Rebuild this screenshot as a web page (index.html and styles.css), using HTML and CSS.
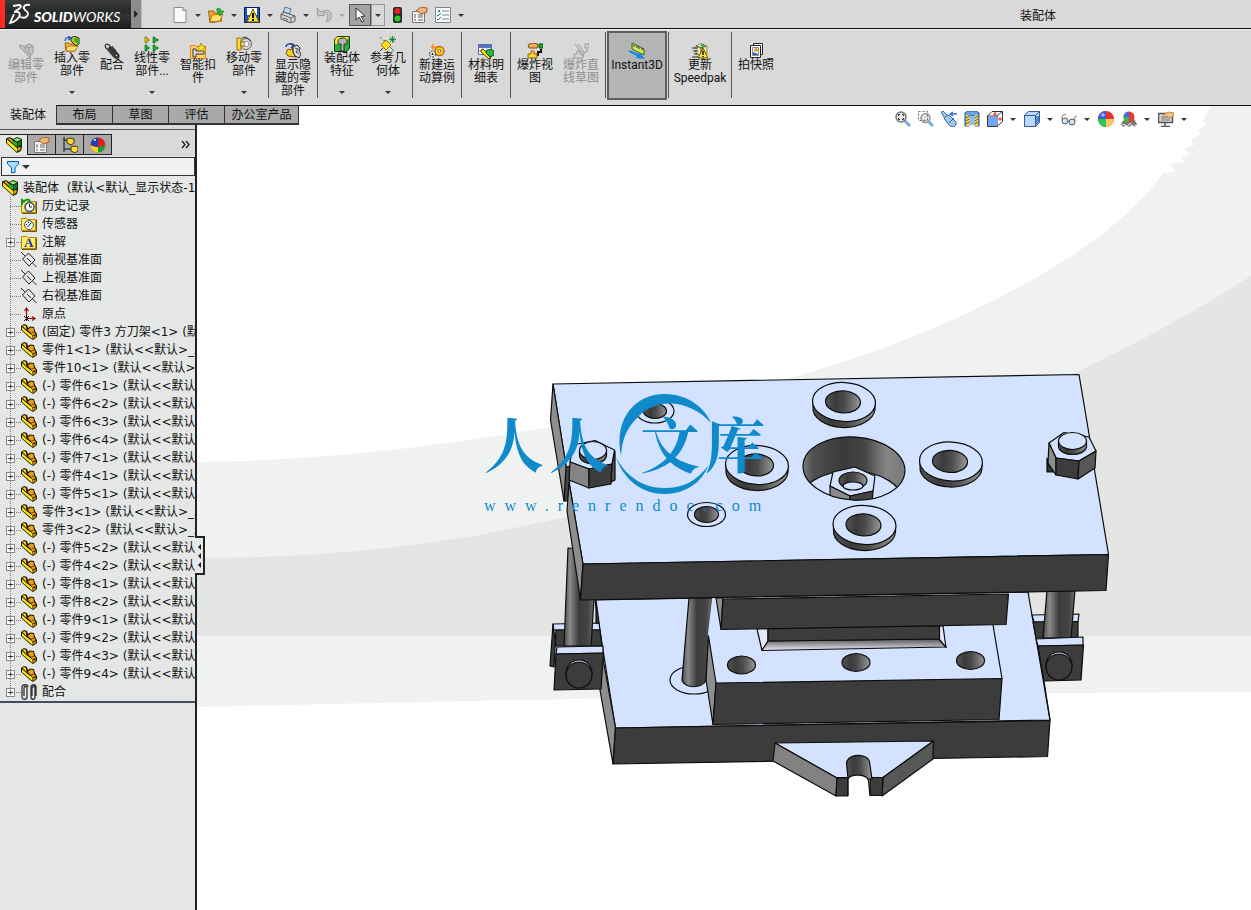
FILE: index.html
```html
<!DOCTYPE html>
<html lang="zh-CN">
<head>
    <meta charset="UTF-8">
    <meta name="viewport" content="width=device-width, initial-scale=1.0">
    <title>装配体 - SOLIDWORKS</title>
    <link rel="stylesheet" href="styles.css">
</head>
<body>
    <svg class="sprite" aria-hidden="true">
        <symbol id="i-part" viewBox="0 0 16 16">
            <path d="M0 2 3 0l3 1 1 3 2-1.500 4 .500 1 4 2 3v3l-4 3-3-2-9-8z" fill="#181200"/>
            <path d="m1 3 5 4.500 5.500 4V15L1 6z" fill="#ffe81a"/>
            <path d="M1.500 2 3 1l2 1 .500 4z" fill="#f4cf1c"/>
            <path d="m6.500 6 3-2.500 3 .500.500 3.500-3 1.500z" fill="#e9a015"/>
            <path d="m10 9.500 3-1.500 2 2-3 1.500z" fill="#e4940f"/>
            <path d="m12 12.500 3-1.500v2l-3 2z" fill="#c98500"/>
        </symbol>
        <symbol id="i-assembly" viewBox="0 0 16 16">
            <path d="M0 1.500 4 0l3 2 4-2 5 2v8l-1 4-4 2L0 6z" fill="#1b1b08"/>
            <path d="m1 2.500 10 8.500v4L1 6z" fill="#ffe81a"/>
            <path d="m2 2 2-1 3 3v2z" fill="#e4a313"/>
            <path d="m7.500 2.500 3.500-1.500 4 1.500-4 2z" fill="#8cf06a"/>
            <path d="m7 4 4 1.500v4L7 7z" fill="#25b52b"/>
            <path d="m11.500 5.500 3.500-2v4.500l-3.500 2z" fill="#0b7d1a"/>
            <path d="m11.500 11 3-1.500v3l-3 2z" fill="#e2a012"/>
        </symbol>
        <symbol id="i-assembly-off" viewBox="0 0 16 16">
            <g fill="#c6c6c6" stroke="#969696"><path d="M1 3 4 2l9 9-1 4z"/><path d="m7 3 4-2 4 2v7l-3 2-5-5z"/><path d="m7 3 4 2 4-2m-4 2v6" fill="none"/></g>
        </symbol>
        <symbol id="i-folder" viewBox="0 0 16 16">
            <path d="M.500 2.500h5l1 1h8v11H.500z" fill="#ffec5c" stroke="#b8860b"/>
            <path d="M15.500 3.500v12H1" fill="none" stroke="#7c5200"/>
        </symbol>
        <symbol id="i-history" viewBox="0 0 16 16">
            <use href="#i-folder"/><circle cx="8.500" cy="9" r="4.500" fill="#fff" stroke="#33478c" stroke-width="1.500"/>
            <path d="M8.500 6v3H11" fill="none" stroke="#222"/><path d="M1 7V2l2 1.500C5 1 8 1 9 3" fill="none" stroke="#0e9a1c" stroke-width="2"/>
        </symbol>
        <symbol id="i-sensor" viewBox="0 0 16 16">
            <use href="#i-folder"/><circle cx="8" cy="9" r="4.500" fill="#eef5ff" stroke="#4b5568"/>
            <path d="m6.500 11 4-4.500M5 8l1 1m1-2.500h1" stroke="#222"/>
        </symbol>
        <symbol id="i-note" viewBox="0 0 16 16">
            <use href="#i-folder"/><text x="3" y="13" class="note-letter">A</text>
        </symbol>
        <symbol id="i-plane" viewBox="0 0 16 16">
            <path d="M7.500 1 14 8 8 14 1.500 7zM0 0l4 4M11.500 11l4 4M6 6l4 4" fill="none" stroke="#222"/>
        </symbol>
        <symbol id="i-origin" viewBox="0 0 16 16">
            <path d="M5.500 12V3m-2 2 2-3 2 3M6 12.500h7m-2-2 3 2-3 2" fill="none" stroke="#9c0b0b" stroke-width="1.200"/>
            <path d="m3 10 5 5m0-5-5 5M5.500 9v6" stroke="#111"/>
        </symbol>
        <symbol id="i-clips" viewBox="0 0 16 16">
            <g fill="none" stroke="#333" stroke-width="1.300"><path d="M3 12V4c0-2 3-2 3 0v9c0 3-5 3-5 0V3C1 0 7 0 7 3M11 12V4c0-2 3-2 3 0v9c0 3-4 3-4 0V3c0-3 5-3 5 0v9"/></g>
        </symbol>
        <symbol id="i-clip" viewBox="0 0 16 16">
            <path d="M4 5 11 13c2 2 4 0 2-2L5 2C2 0 0 2 2 5l8 9c3 3 7 0 4-3L8 3M5 4l7 8" fill="none" stroke="#303030" stroke-width="1.200"/>
        </symbol>
        <symbol id="i-insert" viewBox="0 0 16 16">
            <path d="M1 7h4l1 1h5v7H2z" fill="#f5b93c" stroke="#9a6208"/><path d="m3 10h11l-3 5H2z" fill="#ffdf72" stroke="#b9750c"/>
            <path d="M7 2l3-2 5 2v6l-3 2-5-5z" fill="#d6b51b" stroke="#29300d"/><path d="m10 3 2-1 3 2v4l-4-2z" fill="#22b932"/>
            <path d="M1 5c0-3 2-4 5-3M4 0l3 2-3 2" fill="none" stroke="#1759c6" stroke-width="1.300"/>
        </symbol>
        <symbol id="i-pattern" viewBox="0 0 16 16">
            <path d="M1 1h2v2h2v2H3v2H1z" fill="#e3c300" stroke="#675700" stroke-width=".6"/>
            <g fill="#10c22c" stroke="#04520f" stroke-width=".6"><path d="M9 1h2v2h3v2h-3v2H9z"/><path d="M1 9h2v2h2v2H3v2H1z"/><path d="M9 9h2v2h3v2h-3v2H9z"/></g>
        </symbol>
        <symbol id="i-fastener" viewBox="0 0 16 16">
            <path d="M.500 2.500h5l1 1h9v12H.500z" fill="#ffd068" stroke="#d98c14"/><path d="M3 6h3v2h8v3H6v3H3z" fill="#ddd" stroke="#333"/><path d="m11 0 1.500 3 3.500.500-2.500 2 .500 3.500-3-2-3 2 1-3.500-2-2 3-.500z" fill="#ffe623" stroke="#9b6a00" stroke-width=".7"/>
        </symbol>
        <symbol id="i-move" viewBox="0 0 16 16">
            <path d="M1 2h4v4h4v4H5v4H1z" fill="#ffde31" stroke="#9c7200"/><circle cx="10" cy="8" r="5.500" fill="none" stroke="#666"/><circle cx="10.500" cy="8" r="2.500" fill="#fff" stroke="#888"/><path d="m6 2 4-1 5 4" fill="none" stroke="#333"/>
        </symbol>
        <symbol id="i-show" viewBox="0 0 16 16">
            <path d="M1 4c0-3 4-4 7-2M5 0l4 2-3 3" fill="none" stroke="#1646a0" stroke-width="1.500"/><path d="m1 10 2-4 3 1 2-2v4l3 5-8-1z" fill="#ffd223" stroke="#7b4e00"/><path d="m8 4 4-2 3 3-1 3 2 3-2 4-4-2-2-4z" fill="#dcdcdc" stroke="#222"/><path d="m10 5 3 1-2 3 3 2" fill="none" stroke="#444"/>
        </symbol>
        <symbol id="i-feature" viewBox="0 0 16 16">
            <path d="M.500 4 3 .500h12.500V12L13 15.500H.500z" fill="#24b332" stroke="#14460f"/><path d="M1 4 3 1h12l-2 3v4H1z" fill="#ffe52b"/><path d="M4 5c0-4 9-4 9 0v3h-3v7H7V8H4z" fill="#b6b6b6" stroke="#333"/>
        </symbol>
        <symbol id="i-refgeo" viewBox="0 0 16 16">
            <path d="m6 4 5 5-5 5-5-5z" fill="#ffdd24" stroke="#a27600"/><path d="M0 2h2m1 2 2 1m5 6 4 4" stroke="#2d9d34"/><path d="M12.500 0v7M9 3.500h7M10 1l5 5m0-5-5 5" stroke="#188a2c"/><path d="M0 15 3 12" stroke="#222"/>
        </symbol>
        <symbol id="i-motion" viewBox="0 0 16 16">
            <circle cx="10.500" cy="8" r="4.500" fill="#ffd13a" stroke="#b46b00" stroke-width="1.500"/><circle cx="10.500" cy="8" r="1.500" fill="#fff" stroke="#8d5400"/><circle cx="3.500" cy="11" r="3" fill="#eee" stroke="#222" stroke-dasharray="2 1"/><circle cx="3.500" cy="11" r="1" fill="#111"/><path d="m4 0 1 3 3 1-3 1-1 3-1-3-2-1 2-1z" fill="#ff8b1b"/>
        </symbol>
        <symbol id="i-bom" viewBox="0 0 16 16">
            <path d="M.500 1.500h13v10H.500z" fill="#fff" stroke="#596b9b"/><path d="M1 2h12v3H1z" fill="#5575c4"/><path d="M1 8h12M5 5v6M9 5v6" stroke="#9ba8c5"/><path d="m3 7 2-1 5 5 3 4-2 1-8-7z" fill="#ffe321" stroke="#454000"/><path d="m8 8 4-2 4 2v4l-4 2-4-4z" fill="#2cb63a" stroke="#0c4c12"/>
        </symbol>
        <symbol id="i-explode" viewBox="0 0 16 16">
            <path d="m1 2 4-2 6 1-1 4H6L2 5z" fill="#efae62" stroke="#8a4e10"/><path d="M12 1h4v4h-4z" fill="#19b82b" stroke="#07480f"/><path d="M14 6v3h-3v3H8" fill="none" stroke="#111" stroke-width="2"/><path d="M4 8h3v3h3v4H1v-4h3z" fill="#ffd334" stroke="#936700"/>
        </symbol>
        <symbol id="i-explode-off" viewBox="0 0 16 16">
            <g fill="#d6d6d6" stroke="#999"><path d="M12 1h4v4h-4zM4 8h3v3h3v4H1v-4h3z"/><path d="M14 6v3h-3v3H8M2 1l7 9M5 1l6 8" fill="none"/></g>
        </symbol>
        <symbol id="i-instant" viewBox="0 0 16 16">
            <path d="m3 0 12 6v6L3 6z" fill="#c8f05c" stroke="#47551c"/><path d="M5 2v2m3-1v2m2-1v2m3-1v2" stroke="#222"/><path d="m0 7 10 4V9l6 7-9-1 1-2-8-4z" fill="#1787e8"/>
        </symbol>
        <symbol id="i-speedpak" viewBox="0 0 16 16">
            <path d="m4 3 5-3 6 3v8l-5 3-6-4z" fill="#ecec9c" stroke="#333" stroke-dasharray="1 1"/><path d="m4 3 5 2 5-2M9 5v8" fill="none" stroke="#444"/><path d="m8 2 3-1 2 1-3 2z" fill="#1fab34"/><path d="M0 5h6M1 8h5M0 14h6M2 11h4" stroke="#222"/><path d="m11 5 5 10H6z" fill="#ffe32a" stroke="#615500"/><path d="M11 8v4m0 1v1" stroke="#111" stroke-width="1.500"/>
        </symbol>
        <symbol id="i-snapshot" viewBox="0 0 16 16">
            <path d="M5.500.500h9v11h-9z" fill="#fff" stroke="#222"/><path d="M2.500 2.500h10v12h-10z" fill="#fff" stroke="#222"/><path d="M4.500 4.500h6v8h-6z" fill="#fff" stroke="#888"/><circle cx="8" cy="7" r="2" fill="#e0a33d"/><path d="M5 12V9l5 2v1z" fill="#3562bd"/>
        </symbol>
        <symbol id="i-new" viewBox="0 0 16 16"><path d="M2 .500h9l3 3v12H2z" fill="#f8f9fa" stroke="#8a8d90"/><path d="M11 .500v3h3" fill="#d3d6da" stroke="#8a8d90"/></symbol>
        <symbol id="i-open" viewBox="0 0 16 16"><path d="M.500 4h5l1 2h7v8L2 16z" fill="#e9a933" stroke="#9d6209"/><path d="m4 8 11-1-3 7-10 1z" fill="#ffdf71" stroke="#b5770e"/><path d="M8 3c2-3 5-2 5 1h3l-4 5-3-5h2c0-1-1-1-3-1z" fill="#27b935" stroke="#08751a" stroke-width=".6"/></symbol>
        <symbol id="i-save" viewBox="0 0 16 16"><path d="M.500.500h15v15H.500z" fill="#1a55b8" stroke="#061d5b"/><path d="M3 1h10v7H3zM4 10h8v5H4z" fill="#fff"/><path d="m9 2 6 13H3z" fill="#ffe22a" stroke="#655400"/><path d="M9 6v5m0 1v2" stroke="#000" stroke-width="2"/></symbol>
        <symbol id="i-print" viewBox="0 0 16 16"><path d="m5 0 6 2-2 6-6-2z" fill="#bddaf5" stroke="#517298"/><path d="m1 7 3-2 11 4v5l-4 2-10-4z" fill="#d4d5d7" stroke="#52575c"/><path d="m1 7 10 4 4-2m-4 2v5M3 11l5 2" fill="none" stroke="#666"/></symbol>
        <symbol id="i-undo" viewBox="0 0 16 16"><path d="m1 1 1 8 7-1-2-2c4-2 7 2 3 8l2 1c7-8 2-15-7-10L3 3z" fill="#cacaca" stroke="#999"/></symbol>
        <symbol id="i-cursor" viewBox="0 0 16 16"><path d="m4 1 9 8-4 .500 3 4.500-2 1-3-5-3 3z" fill="#fff" stroke="#333"/></symbol>
        <symbol id="i-traffic" viewBox="0 0 16 16"><rect x="4" width="9" height="16" rx="2" fill="#2b2b2b"/><circle cx="8.500" cy="4" r="3" fill="#ef2020"/><circle cx="8.500" cy="11.500" r="3" fill="#20ce24"/></symbol>
        <symbol id="i-props" viewBox="0 0 16 16"><path d="M.500 4.500h12v11H.500z" fill="#f5f5f5" stroke="#777"/><path d="M2 8h2m2 0h5M2 10h2m2 0h5M2 13h2m2 0h5" stroke="#666"/><path d="m4 4 5-4 6 1v4L9 7 7 5z" fill="#efb47c" stroke="#a75d1f"/></symbol>
        <symbol id="i-options" viewBox="0 0 16 16"><path d="M.500.500h15v15H.500z" fill="#f7f9fa" stroke="#788592"/><path d="M3 3h2v2H3z" fill="#5578b0"/><path d="M7 4h7M7 8h7M7 12h7" stroke="#7485a1"/><path d="m2 8 1 1 3-3m-4 6 1 1 3-3" fill="none" stroke="#17943b"/></symbol>
        <symbol id="i-config" viewBox="0 0 16 16"><path d="M2 0v15M2 3h4M2 12h8" fill="none" stroke="#111"/><path d="m5 2 3-1 4 1v4L9 8 5 6zM9 10l3-1 4 1v4l-3 2-4-2z" fill="#ffd735" stroke="#443600"/></symbol>
        <symbol id="i-ball" viewBox="0 0 16 16"><circle cx="8" cy="8" r="8" fill="#e8322f"/><path d="M8 0a8 8 0 0 0-8 8l8 1z" fill="#3c5de0"/><path d="M0 8a8 8 0 0 0 8 8V8z" fill="#2dc84b"/><path d="M16 8a8 8 0 0 1-8 8V8z" fill="#f8c96b"/><circle cx="5" cy="4" r="1.800" fill="#fff" opacity=".55"/></symbol>
        <symbol id="i-display-ball" viewBox="0 0 16 16"><circle cx="8" cy="8" r="7.500" fill="#e21d24"/><path d="M8 .500A7.500 7.500 0 0 0 .500 8L8 10z" fill="#1742b7"/><path d="M.500 8c5 3 10 3 15 0A7.500 7.500 0 0 1 .500 8" fill="#f5d51d"/><path d="M8 10v5.500c5 0 7-4 7.500-7z" fill="#169b35"/><circle cx="5" cy="3" r="1" fill="#fff"/></symbol>
        <symbol id="i-funnel" viewBox="0 0 12 12"><path d="M.500.500h11V3L8 6.500v5H4.500v-5L.500 3z" fill="#a6e2ff" stroke="#0755ad"/></symbol>
        <symbol id="i-zoomfit" viewBox="0 0 16 16"><path d="m9 9 6 6" stroke="#78a9e8" stroke-width="3"/><circle cx="6" cy="6" r="5" fill="#e4e4e4" stroke="#777" stroke-width="1.500"/><path d="M3.500 5V3.500H5M7 3.500h1.500V5M8.500 7v1.500H7M5 8.500H3.500V7" fill="none" stroke="#333"/></symbol>
        <symbol id="i-zoomarea" viewBox="0 0 16 16"><path d="m10 10 5 5" stroke="#78a9e8" stroke-width="3"/><circle cx="7.500" cy="7" r="4.500" fill="#ddd" stroke="#999" stroke-width="1.500"/><path d="M.500.500h9v9h-9z" fill="none" stroke="#666" stroke-dasharray="2 2"/></symbol>
        <symbol id="i-prev" viewBox="0 0 16 16"><path d="m0 1 2-1 4 4 3 1 6 6v3l-2 2-4-1-5-6-1-3z" fill="#9cc9f0" stroke="#456b96"/><path d="m4 6 3-2m1 8 5-5" stroke="#456b96"/><path d="M16 3h-6m2-2-3 2 3 2" fill="none" stroke="#376fe1" stroke-width="1.500"/></symbol>
        <symbol id="i-section" viewBox="0 0 16 16"><path d="m1 2 3-2h8l3 2v13h-4V5H5v10H1z" fill="#6aa5e8" stroke="#245095"/><path d="M5 5h6v9H5z" fill="#8fbdf0"/><path d="M2 4h3v11H2zM11 4h3v11h-3z" fill="#ffd83e"/><path d="m2 7 3-2m-3 5 3-2m-3 5 3-2m6-4 3-2m-3 5 3-2m-3 5 3-2" stroke="#7b4c00"/></symbol>
        <symbol id="i-orient" viewBox="0 0 16 16"><path d="M5 .500h10.500v10L10 15.500H.500V5zM.500 5H10V15.500M10 5l5.500-4.500" fill="#fff" stroke="#333"/><path d="M1 6h9v9H1z" fill="#73a5ff"/><path d="M8 1v4M6 3h4m3 3v4m-2-2h4" stroke="#e42b2b"/></symbol>
        <symbol id="i-cube" viewBox="0 0 16 16"><path d="m.500 4 4-3.500h11v11l-4 4H.500z" fill="#b9d8ff" stroke="#365a91"/><path d="M11 5h4v6l-4 4z" fill="#5687d0"/><path d="M.500 4.500h11v11m0-11 4-4" fill="none" stroke="#365a91"/></symbol>
        <symbol id="i-glasses" viewBox="0 0 16 16"><circle cx="4" cy="10" r="3" fill="#cbe3f5" stroke="#555"/><circle cx="11" cy="11" r="3" fill="#cbe3f5" stroke="#555"/><path d="M7 10h1M1 9c0-5 2-7 4-5m9 6c-1-4 0-6 2-4" fill="none" stroke="#777"/></symbol>
        <symbol id="i-scene" viewBox="0 0 16 16"><path d="m1 11 3-3h9l3 5-2 3-3-2-3 2-3-2-3 2-2-2z" fill="#777"/><path d="m0 15 3-2 3 3 3-4 3 4 3-2" fill="none" stroke="#eee"/><circle cx="8" cy="6" r="5.500" fill="#e33b37"/><path d="M8 .500A5.500 5.500 0 0 0 2.500 6L8 7z" fill="#4369e6"/><path d="M2.500 6a5.500 5.500 0 0 0 5.500 5.500V6z" fill="#33bf47"/></symbol>
        <symbol id="i-view" viewBox="0 0 16 16"><path d="M.500 2.500h14v9H.500zM7 12v3m-4 .500h9" fill="#d9d9d9" stroke="#555" stroke-width="1.500"/><path d="M3 5h9v5H3z" fill="#aaa"/><path d="m5 4 5-3 6 1v3l-5 2-2-2-4 2z" fill="#f4bf88" stroke="#b77133" stroke-width=".7"/></symbol>
    </svg>

    <header class="titlebar">
        <div class="brand">
            <svg class="brand-mark" viewBox="0 0 24 24" aria-hidden="true"><path d="M5 4l6-1c3 0 3 3-4 6M6 10c5-1 7 1 5 5-2 3-5 5-9 6l4-9M22 3c-5-1-8 2-5 5 3 2 4 4 2 6-1 2-4 2-7 1" fill="none" stroke="#fff" stroke-width="1.800"/></svg>
            <span class="brand-name"><b>SOLID</b>WORKS</span>
        </div>
        <button class="brand-more" aria-label="菜单"><i class="caret-right"></i></button>
        <div class="quick-tools">
            <button class="tool" aria-label="新建"><svg><use href="#i-new"/></svg></button><button class="drop" aria-label="新建选项"><i class="caret"></i></button>
            <button class="tool" aria-label="打开"><svg><use href="#i-open"/></svg></button><button class="drop" aria-label="打开选项"><i class="caret"></i></button>
            <button class="tool" aria-label="保存"><svg><use href="#i-save"/></svg></button><button class="drop" aria-label="保存选项"><i class="caret"></i></button>
            <button class="tool" aria-label="打印"><svg><use href="#i-print"/></svg></button><button class="drop" aria-label="打印选项"><i class="caret"></i></button>
            <button class="tool" aria-label="撤销" disabled><svg><use href="#i-undo"/></svg></button><button class="drop" aria-label="撤销选项" disabled><i class="caret"></i></button>
            <button class="tool selected" aria-label="选择"><svg><use href="#i-cursor"/></svg></button><button class="drop framed" aria-label="选择选项"><i class="caret"></i></button>
            <button class="tool" aria-label="重建模型"><svg><use href="#i-traffic"/></svg></button>
            <button class="tool" aria-label="文件属性"><svg><use href="#i-props"/></svg></button>
            <button class="tool" aria-label="选项"><svg><use href="#i-options"/></svg></button><button class="drop" aria-label="更多选项"><i class="caret"></i></button>
        </div>
        <h1 class="doc-title">装配体</h1>
    </header>

    <div class="ribbon">
        <button class="cmd" disabled><svg><use href="#i-assembly-off"/></svg><span>编辑零<br>部件</span></button>
        <button class="cmd has-menu"><svg><use href="#i-insert"/></svg><span>插入零<br>部件</span><i class="caret"></i></button>
        <button class="cmd narrow"><svg><use href="#i-clip"/></svg><span>配合</span></button>
        <button class="cmd has-menu"><svg><use href="#i-pattern"/></svg><span>线性零<br>部件...</span><i class="caret"></i></button>
        <button class="cmd"><svg><use href="#i-fastener"/></svg><span>智能扣<br>件</span></button>
        <button class="cmd has-menu"><svg><use href="#i-move"/></svg><span>移动零<br>部件</span><i class="caret"></i></button>
        <div class="divider"></div>
        <button class="cmd"><svg><use href="#i-show"/></svg><span>显示隐<br>藏的零<br>部件</span></button>
        <div class="divider"></div>
        <button class="cmd has-menu"><svg><use href="#i-feature"/></svg><span>装配体<br>特征</span><i class="caret"></i></button>
        <button class="cmd has-menu"><svg><use href="#i-refgeo"/></svg><span>参考几<br>何体</span><i class="caret"></i></button>
        <div class="divider"></div>
        <button class="cmd"><svg><use href="#i-motion"/></svg><span>新建运<br>动算例</span></button>
        <div class="divider"></div>
        <button class="cmd"><svg><use href="#i-bom"/></svg><span>材料明<br>细表</span></button>
        <div class="divider"></div>
        <button class="cmd"><svg><use href="#i-explode"/></svg><span>爆炸视<br>图</span></button>
        <button class="cmd" disabled><svg><use href="#i-explode-off"/></svg><span>爆炸直<br>线草图</span></button>
        <div class="divider"></div>
        <button class="cmd wide pressed"><svg><use href="#i-instant"/></svg><span>Instant3D</span></button>
        <div class="divider"></div>
        <button class="cmd wide"><svg><use href="#i-speedpak"/></svg><span>更新<br>Speedpak</span></button>
        <div class="divider"></div>
        <button class="cmd"><svg><use href="#i-snapshot"/></svg><span>拍快照</span></button>
    </div>

    <div class="workspace">
        <aside class="sidebar">
            <nav class="ribbon-tabs">
                <button class="active">装配体</button>
                <button>布局</button>
                <button>草图</button>
                <button>评估</button>
                <button class="wide">办公室产品</button>
            </nav>
            <div class="panel">
                <div class="panel-tabs">
                    <button class="active" aria-label="设计树"><svg><use href="#i-assembly"/></svg></button>
                    <button aria-label="属性"><svg><use href="#i-props"/></svg></button>
                    <button aria-label="配置"><svg><use href="#i-config"/></svg></button>
                    <button aria-label="外观"><svg><use href="#i-display-ball"/></svg></button>
                    <button class="more" aria-label="展开"><svg viewBox="0 0 9 9"><path d="m1 1 3 3.500L1 8m4-7 3 3.500L5 8" fill="none" stroke="#222" stroke-width="1.400"/></svg></button>
                </div>
                <div class="filter">
                    <button aria-label="过滤"><svg><use href="#i-funnel"/></svg><i class="caret"></i></button>
                    <input type="text" aria-label="过滤设计树">
                </div>
                <div class="tree-box">
                    <div class="root"><svg><use href="#i-assembly"/></svg><span>装配体&nbsp; (默认&lt;默认_显示状态-1</span></div>
                    <ul class="tree" id="tree">
                        <li><span class="branch"></span><svg><use href="#i-history"/></svg><span>历史记录</span></li>
                        <li><span class="branch"></span><svg><use href="#i-sensor"/></svg><span>传感器</span></li>
                        <li><span class="branch"><button aria-label="展开">+</button></span><svg><use href="#i-note"/></svg><span>注解</span></li>
                        <li><span class="branch"></span><svg><use href="#i-plane"/></svg><span>前视基准面</span></li>
                        <li><span class="branch"></span><svg><use href="#i-plane"/></svg><span>上视基准面</span></li>
                        <li><span class="branch"></span><svg><use href="#i-plane"/></svg><span>右视基准面</span></li>
                        <li><span class="branch"></span><svg><use href="#i-origin"/></svg><span>原点</span></li>
                        <li><span class="branch"><button aria-label="展开">+</button></span><svg><use href="#i-part"/></svg><span>(固定) 零件3 方刀架&lt;1&gt; (默认&lt;&lt;默认&gt;</span></li>
                        <li><span class="branch"><button aria-label="展开">+</button></span><svg><use href="#i-part"/></svg><span>零件1&lt;1&gt; (默认&lt;&lt;默认&gt;_显示状态</span></li>
                        <li><span class="branch"><button aria-label="展开">+</button></span><svg><use href="#i-part"/></svg><span>零件10&lt;1&gt; (默认&lt;&lt;默认&gt;_显示状态</span></li>
                        <li><span class="branch"><button aria-label="展开">+</button></span><svg><use href="#i-part"/></svg><span>(-) 零件6&lt;1&gt; (默认&lt;&lt;默认&gt;</span></li>
                        <li><span class="branch"><button aria-label="展开">+</button></span><svg><use href="#i-part"/></svg><span>(-) 零件6&lt;2&gt; (默认&lt;&lt;默认&gt;</span></li>
                        <li><span class="branch"><button aria-label="展开">+</button></span><svg><use href="#i-part"/></svg><span>(-) 零件6&lt;3&gt; (默认&lt;&lt;默认&gt;</span></li>
                        <li><span class="branch"><button aria-label="展开">+</button></span><svg><use href="#i-part"/></svg><span>(-) 零件6&lt;4&gt; (默认&lt;&lt;默认&gt;</span></li>
                        <li><span class="branch"><button aria-label="展开">+</button></span><svg><use href="#i-part"/></svg><span>(-) 零件7&lt;1&gt; (默认&lt;&lt;默认&gt;</span></li>
                        <li><span class="branch"><button aria-label="展开">+</button></span><svg><use href="#i-part"/></svg><span>(-) 零件4&lt;1&gt; (默认&lt;&lt;默认&gt;</span></li>
                        <li><span class="branch"><button aria-label="展开">+</button></span><svg><use href="#i-part"/></svg><span>(-) 零件5&lt;1&gt; (默认&lt;&lt;默认&gt;</span></li>
                        <li><span class="branch"><button aria-label="展开">+</button></span><svg><use href="#i-part"/></svg><span>零件3&lt;1&gt; (默认&lt;&lt;默认&gt;_显示状态</span></li>
                        <li><span class="branch"><button aria-label="展开">+</button></span><svg><use href="#i-part"/></svg><span>零件3&lt;2&gt; (默认&lt;&lt;默认&gt;_显示状态</span></li>
                        <li><span class="branch"><button aria-label="展开">+</button></span><svg><use href="#i-part"/></svg><span>(-) 零件5&lt;2&gt; (默认&lt;&lt;默认&gt;</span></li>
                        <li><span class="branch"><button aria-label="展开">+</button></span><svg><use href="#i-part"/></svg><span>(-) 零件4&lt;2&gt; (默认&lt;&lt;默认&gt;</span></li>
                        <li><span class="branch"><button aria-label="展开">+</button></span><svg><use href="#i-part"/></svg><span>(-) 零件8&lt;1&gt; (默认&lt;&lt;默认&gt;</span></li>
                        <li><span class="branch"><button aria-label="展开">+</button></span><svg><use href="#i-part"/></svg><span>(-) 零件8&lt;2&gt; (默认&lt;&lt;默认&gt;</span></li>
                        <li><span class="branch"><button aria-label="展开">+</button></span><svg><use href="#i-part"/></svg><span>(-) 零件9&lt;1&gt; (默认&lt;&lt;默认&gt;</span></li>
                        <li><span class="branch"><button aria-label="展开">+</button></span><svg><use href="#i-part"/></svg><span>(-) 零件9&lt;2&gt; (默认&lt;&lt;默认&gt;</span></li>
                        <li><span class="branch"><button aria-label="展开">+</button></span><svg><use href="#i-part"/></svg><span>(-) 零件4&lt;3&gt; (默认&lt;&lt;默认&gt;</span></li>
                        <li><span class="branch"><button aria-label="展开">+</button></span><svg><use href="#i-part"/></svg><span>(-) 零件9&lt;4&gt; (默认&lt;&lt;默认&gt;</span></li>
                        <li><span class="branch"><button aria-label="展开">+</button></span><svg><use href="#i-clips"/></svg><span>配合</span></li>
                    </ul>
                </div>
            </div>
        </aside>

        <main class="viewport">
            <svg class="scene" viewBox="197 106 1054 804" preserveAspectRatio="xMidYMid slice" role="img" aria-label="装配体模型">
                <defs>
                    <linearGradient id="bore"><stop offset="0" stop-color="#555"/><stop offset=".3" stop-color="#3b3b3b"/><stop offset=".55" stop-color="#4c4c4c"/><stop offset="1" stop-color="#989898"/></linearGradient>
                    <linearGradient id="shaft"><stop offset="0" stop-color="#4b4b4b"/><stop offset=".2" stop-color="#8a8a8a"/><stop offset=".5" stop-color="#3b3b3b"/><stop offset=".8" stop-color="#444"/><stop offset="1" stop-color="#707070"/></linearGradient>
                    <linearGradient id="pocket"><stop offset="0" stop-color="#888"/><stop offset=".12" stop-color="#505050"/><stop offset=".4" stop-color="#393939"/><stop offset=".6" stop-color="#454545"/><stop offset=".8" stop-color="#858585"/><stop offset="1" stop-color="#777"/></linearGradient>
                    <linearGradient id="fillet" x2="0" y2="1"><stop offset="0" stop-color="#555"/><stop offset="1" stop-color="#eceafa"/></linearGradient>
                    <linearGradient id="band"><stop offset="0" stop-color="#e2e5e4"/><stop offset="1" stop-color="#e5e6e4"/></linearGradient>
                    <clipPath id="pocket-clip"><ellipse cx="854" cy="468.500" rx="51" ry="31.500" transform="rotate(4 854 468)"/></clipPath>
                    <g id="washer">
                        <path d="M-31-1v6a31 19.500 0 0 0 62 2v-6z" fill="url(#bore)"/>
                        <ellipse rx="31.500" ry="19.500" transform="rotate(3)" fill="#d3e2ff"/>
                        <ellipse cx="-1" rx="17.500" ry="11" transform="rotate(3)" fill="url(#bore)"/>
                    </g>
                </defs>

                <!-- background -->
                <path class="haze" d="M1210 106 1203 122 1206 124 1198 130 1201 134 1191 140 1194 145 1184 149 1190 154 1181 158 1186 161 1171 164 1175 172 1163 173C1110 250 960 330 790 378L550 427C430 448 310 461 197 462V707C400 703 700 694 1251 692V106z"/>
                <path d="M1251 276C1130 352 1010 410 870 445 720 485 530 525 480 535 390 550 300 558 197 558V636H1251z" fill="url(#band)"/>

                <g class="model">
                    <!-- base plate -->
                    <path class="light" d="M595 600 1028 592 1050 720 615.500 728z"/>
                    <path class="side" d="M602 653 615.500 728 613 764 600 690z"/>
                    <path class="dark" d="M615.500 728 1050 720.500 1047.500 756.500 613 764z"/>
                    <!-- clamps -->
                    <path class="light" d="M553 624 599 623 600 630H553z"/>
                    <path class="dark" d="M553 624 550 666 554 667 556 630H600L602 646H556z"/>
                    <path class="dark" d="M596 600V623H599z"/>
                    <path class="light" d="M1032 615 1079 614 1078 621.500 1034 622z"/>
                    <path class="dark" d="M1033 622 1078 621.500 1078 638H1036z"/>
                    <path d="M568 548 564 646H591L594 599V550z" fill="url(#shaft)"/>
                    <path d="M1047 590 1043 638H1071L1075 590z" fill="url(#shaft)"/>
                    <path class="light" d="M557 647 603 646V653L556 654z"/>
                    <path class="dark" d="M556 654 603.500 653 601 689 554 690z"/>
                    <circle cx="579" cy="673" r="13" class="light"/><circle cx="579" cy="675" r="13" class="dark"/>
                    <path class="light" d="M1036 639 1083 637V645L1038 646z"/>
                    <path class="dark" d="M1038 646 1083.500 645 1081 680 1044 681z"/>
                    <circle cx="1059" cy="665" r="13" class="light"/><circle cx="1059" cy="667" r="13" class="dark"/>
                    <path d="M1050 720 1044 681" fill="none"/>
                    <!-- front pin -->
                    <ellipse cx="694" cy="680" rx="24" ry="14" fill="none"/>
                    <path d="M689 598 682 680C684 689 703 689 706 680L712 598z" fill="url(#shaft)"/>
                    <!-- lower block -->
                    <path class="light" d="M708 634 712 598 993 594V625L1002 678.500 716 683z" stroke="none"/>
                    <path d="M993 625 1002 678.500" fill="none"/>
                    <path class="side" d="M708.500 636 716 683 713 724.500 706 680z"/>
                    <path class="dark" d="M716 683 1002 678.500 999 719.500 713 724.500z"/>
                    <g fill="url(#bore)"><ellipse cx="741.500" cy="665" rx="14" ry="9"/><ellipse cx="856" cy="662.500" rx="14" ry="9"/><ellipse cx="970.500" cy="660.500" rx="14" ry="9"/></g>
                    <!-- neck -->
                    <path d="M757 629 762 650.500 768 641V628z" fill="#e6e7fb"/>
                    <path d="M768 641 939 639 946 647 762 650.500z" fill="url(#fillet)"/>
                    <path d="M939 626H943L946 647.500 939 639z" fill="#e6e7fb"/>
                    <path class="dark" d="M768 628 939.500 626V639L768 641z"/>
                    <!-- upper block -->
                    <path class="side" d="M716 598H723L721 629.500z"/>
                    <path class="dark" d="M723 599 1008.500 594 1006 624.500 721 629.500z"/>
                    <!-- foot -->
                    <path class="light" d="M775 743 933.500 741 883 777.500H836z"/>
                    <path d="M775 743 837 778 836 796 773 761z" fill="#828282"/>
                    <path d="M933.500 741 883 777.500 882 796 933 759z" fill="#555857"/>
                    <path class="dark" d="M837 778H848V796H836zM870 777.500H883L882 795.500H870z"/>
                    <path d="M848 779 846.500 763C848 753 868 753 869.500 762L872 779z" fill="url(#bore)"/>
                    <path d="M848.500 797V779C850 774 867 773 868.500 781L870 797z" fill="#fff" stroke="none"/>
                    <path d="M848 796V779C850 774 867 773 868.500 781L870 796" fill="none"/>

                    <!-- top plate -->
                    <path class="light" d="M553 384 1079 374.500 1089 434 1095 473 1108.500 554.500 583 564 569 482 566 466z"/>
                    <path class="side" d="M553 384 550.500 420 564 501 569 482 566 466z"/>
                    <path d="M566 467 571 466 568 501 564 501z" fill="#444"/>
                    <path class="side" d="M569 482 583 564 580.500 600 567 511z"/>
                    <path class="dark" d="M583 564 1108.500 554.500 1106 590.500 580.500 600z"/>

                    <use href="#washer" x="844" y="402"/>
                    <use href="#washer" x="951" y="461.500"/>
                    <use href="#washer" x="757" y="465"/>
                    <use href="#washer" x="864.500" y="525"/>
                    <g class="light"><ellipse cx="655" cy="411" rx="19" ry="12"/><ellipse cx="706.500" cy="514.500" rx="19" ry="12"/></g>
                    <g fill="url(#bore)"><ellipse cx="655" cy="411" rx="11.500" ry="7.500"/><ellipse cx="706.500" cy="514.500" rx="12" ry="8"/></g>

                    <!-- centre pocket with its nut -->
                    <g clip-path="url(#pocket-clip)">
                        <rect x="800" y="434" width="108" height="70" fill="url(#pocket)" stroke="none"/>
                        <ellipse cx="851" cy="503" rx="53" ry="32" class="light"/>
                        <path class="light" d="M833 472 855 467 875 476 873 491 850 496 830 486z"/>
                        <path d="M830 486 850 496V502L830 496z" fill="#8b8b8b"/>
                        <path d="M850 496 873 491 872 504H850z" fill="#444"/>
                        <ellipse cx="853" cy="480.500" rx="14" ry="8.500" fill="url(#bore)"/>
                        <ellipse cx="853" cy="486" rx="10" ry="4" class="light"/>
                    </g>
                    <ellipse cx="854" cy="468.500" rx="51" ry="31.500" transform="rotate(4 854 468)" fill="none"/>

                    <!-- corner nuts -->
                    <path d="M612 464 615 451V480L611 482z" fill="#555"/>
                    <path class="light" d="M573 445 595 440.500 614.500 450 612 464 589 469 570 462z"/>
                    <path d="M570 462 589 469V488L569 480z" fill="#858585"/>
                    <path class="dark" d="M589 469 612 464 611 484 589 488z"/>
                    <path d="M579.500 451V456C582 467 604 466 606.500 456V451z" fill="url(#bore)"/>
                    <ellipse cx="593" cy="450.500" rx="13.500" ry="9" class="light"/>
                    <path d="M1048 464 1047 458V472H1055z" fill="#333"/>
                    <path class="light" d="M1049 443 1064 432.500 1089 437 1096 451 1079 461 1056 458z"/>
                    <path d="M1049 443 1056 458V475L1048 463z" fill="#8d8d8d"/>
                    <path class="dark" d="M1056 458 1079 461 1078 479 1056 475z"/>
                    <path d="M1079 461 1096 451 1095 468 1078 479z" fill="#555857"/>
                    <path d="M1058.500 441V447C1061 457 1084 457 1086.500 447V441z" fill="url(#bore)"/>
                    <ellipse cx="1072.500" cy="441" rx="14" ry="8.500" class="light"/>
                </g>

                <g class="watermark">
                    <path d="M621 456C613 416 638 394 664 394 690 394 706 410 711 423 692 401 657 395 637 418 625 430 622 442 621 456z"/>
                    <path d="M616 457C624 482 645 494 664 494 686 494 702 482 708 466 696 481 684 488 664 488 642 488 625 475 616 457z"/>
                    <text class="brush" x="484" y="468">人</text>
                    <text class="brush" x="549" y="468">人</text>
                    <text class="brush" x="640" y="468">文</text>
                    <text class="brush" x="705" y="468">库</text>
                    <text class="url" x="484" y="511">www.renrendoc.com</text>
                </g>
            </svg>

            <div class="view-tools">
                <button class="tool" aria-label="整屏显示全图"><svg><use href="#i-zoomfit"/></svg></button>
                <button class="tool" aria-label="局部放大"><svg><use href="#i-zoomarea"/></svg></button>
                <button class="tool" aria-label="上一视图"><svg><use href="#i-prev"/></svg></button>
                <button class="tool" aria-label="剖面视图"><svg><use href="#i-section"/></svg></button>
                <button class="tool" aria-label="视图定向"><svg><use href="#i-orient"/></svg></button><button class="drop" aria-label="视图定向选项"><i class="caret"></i></button>
                <button class="tool" aria-label="显示样式"><svg><use href="#i-cube"/></svg></button><button class="drop" aria-label="显示样式选项"><i class="caret"></i></button>
                <button class="tool" aria-label="隐藏项目"><svg><use href="#i-glasses"/></svg></button><button class="drop" aria-label="隐藏项目选项"><i class="caret"></i></button>
                <button class="tool" aria-label="编辑外观"><svg><use href="#i-ball"/></svg></button>
                <button class="tool" aria-label="应用布景"><svg><use href="#i-scene"/></svg></button><button class="drop" aria-label="布景选项"><i class="caret"></i></button>
                <button class="tool" aria-label="视图设定"><svg><use href="#i-view"/></svg></button><button class="drop" aria-label="视图设定选项"><i class="caret"></i></button>
            </div>
            <button class="handle" aria-label="收起面板"><i></i><i></i><i></i></button>
        </main>
    </div>
</body>
</html>
```
FILE: styles.css
```css
* {
    margin: 0;
    padding: 0;
    box-sizing: border-box;
}

body {
    font-family: "Noto Sans", "Noto Sans CJK SC", sans-serif;
    font-size: 12px;
    color: #111;
    background: #d9d9d9;
    height: 100vh;
    display: flex;
    flex-direction: column;
    overflow: hidden;
}

button,
input {
    font: inherit;
    color: inherit;
    background: none;
    border: none;
    outline: none;
}

button {
    display: flex;
    align-items: center;
    justify-content: center;
}

svg {
    display: block;
    flex: none;
    width: 16px;
    height: 16px;
}

.sprite {
    position: absolute;
    width: 0;
    height: 0;
}

.note-letter {
    font: bold 13px "Liberation Serif", serif;
    fill: #0c2fb0;
}

.caret {
    border: 3px solid transparent;
    border-top-color: #333;
    border-bottom: none;
}

/* title bar */
.titlebar {
    display: flex;
    align-items: center;
    height: 29px;
    border-bottom: 1px solid #111;
}

.brand {
    display: flex;
    align-items: center;
    width: 131px;
    height: 28px;
    padding-left: 3px;
    border-left: 5px solid #ff2a23;
    background: linear-gradient(#3a3a3a, #232829 48%, #333 52%, #1c1c1c);
    color: #fff;
}

.brand-mark {
    width: 24px;
    height: 24px;
    margin-right: 2px;
}

.brand-name {
    font-family: Lato, sans-serif;
    font-size: 14px;
    font-style: italic;
    line-height: 16px;
    padding-top: 6px;
}

.brand-name b {
    font-weight: 900;
}

.brand-more {
    width: 11px;
    height: 28px;
    background: #8c8c8c;
    border-right: 1px solid #bbb;
}

.caret-right {
    border: 4px solid transparent;
    border-left-color: #222;
    border-right: none;
}

.quick-tools {
    display: flex;
    margin-left: 27px;
    padding-top: 2px;
}

.tool {
    width: 23px;
    height: 22px;
}

.quick-tools .tool {
    width: 22px;
}

.quick-tools .framed ~ .tool {
    width: 23px;
}

.drop {
    width: 14px;
    height: 22px;
}

.drop:disabled {
    opacity: 0.3;
}

.tool.selected {
    background: #a3a3a3;
    border: 1px solid #555;
}

.drop.framed {
    border: 1px solid #999;
}

.doc-title {
    margin-left: auto;
    margin-right: 195px;
    padding-top: 1px;
    font-size: 12px;
    font-weight: 400;
}

/* ribbon */
.ribbon {
    display: flex;
    height: 77px;
    padding: 1px 0 0 3px;
    border-top: 1px solid #eee;
    border-bottom: 1px solid #111;
}

.cmd {
    flex: none;
    flex-direction: column;
    justify-content: flex-start;
    width: 46px;
    height: 69px;
    padding-top: 12px;
    font-family: Roboto, "Noto Sans CJK SC", sans-serif;
    line-height: 13px;
    white-space: nowrap;
}

.cmd.has-menu {
    padding-top: 5px;
}

.cmd.narrow {
    width: 34px;
}

.cmd.wide {
    width: 60px;
}

.cmd:disabled {
    color: #8f8f8f;
}

.cmd.pressed {
    padding-top: 10px;
    background: #b2b5b4;
    border: 2px solid #5c5f5e;
}

.cmd .caret {
    margin: auto 0 6px;
}

.divider {
    flex: none;
    width: 1px;
    height: 66px;
    margin: 1px 1px 0;
    background: #555;
}

/* left side */
.workspace {
    flex: 1;
    display: flex;
    min-height: 0;
}

.sidebar {
    flex: none;
    width: 197px;
    display: flex;
    flex-direction: column;
    z-index: 1;
}

.ribbon-tabs {
    display: flex;
    width: max-content;
    height: 19px;
    background: #d9d9d9;
}

.ribbon-tabs button {
    width: 56px;
    background: #a9a9a9;
    border: 1px solid #333;
    border-width: 0 1px 2px 0;
    line-height: 16px;
}

.ribbon-tabs button.active {
    width: 57px;
    background: #d9d9d9;
    margin-top: -1px;
    border-bottom: none;
}

.ribbon-tabs button.wide {
    width: 74px;
}

.panel {
    flex: 1;
    min-height: 0;
    border-right: 2px solid #222;
    background: #e4e7e6;
}

.panel-tabs {
    display: flex;
    align-items: flex-end;
    height: 31px;
    padding-bottom: 1px;
    background: linear-gradient(#d9d9d9 4px, #555 4px, #555 5px, #d9d9d9 5px);
}

.panel-tabs button {
    width: 28px;
    height: 21px;
    background: #a9a9a9;
    border: 1px solid #222;
    border-left: none;
}

.panel-tabs button.active {
    background: #e4e7e6;
    border-bottom: none;
}

.panel-tabs button.more {
    width: 20px;
    margin-left: auto;
    background: none;
    border: none;
}

.more svg {
    width: 9px;
    height: 9px;
}

.filter {
    display: flex;
    height: 19px;
    margin: 1px 0 3px 1px;
    border: 1px solid #333;
    background: #f0f2f1;
}

.filter button {
    flex: none;
    width: 32px;
    gap: 3px;
}

.filter svg {
    width: 12px;
    height: 12px;
}

.filter .caret {
    border-width: 4px 4px 0;
}

.filter input {
    flex: 1;
    min-width: 0;
}

.tree-box {
    border-bottom: 2px solid #444a60;
    overflow: hidden;
    font-family: "DejaVu Sans", "Noto Sans CJK SC", sans-serif;
    line-height: 18px;
    white-space: nowrap;
}

.root,
.tree li {
    display: flex;
    align-items: center;
    gap: 5px;
    height: 18px;
}

.root {
    padding: 0 2px;
    overflow: hidden;
}

.tree {
    list-style: none;
}

.branch {
    flex: none;
    display: flex;
    align-items: center;
    width: 21px;
    height: 18px;
    margin-right: -5px;
    padding: 1px 0 0 6px;
    background:
        repeating-linear-gradient(#777 0 1px, transparent 1px 2px) 10px 0 / 1px 18px no-repeat,
        repeating-linear-gradient(90deg, #777 0 1px, transparent 1px 2px) 10px 9px / 11px 1px no-repeat;
}

.branch button {
    width: 9px;
    height: 9px;
    border: 1px solid #888;
    background: #fff;
    font-size: 9px;
    line-height: 7px;
}

.tree li:last-child .branch {
    background-size: 1px 10px, 11px 1px;
}

/* graphics area */
.viewport {
    flex: 1;
    min-width: 0;
    position: relative;
    background: #fff;
}

.scene {
    width: 100%;
    height: 100%;
}

.haze {
    fill: #f0f2f1;
}

.model {
    stroke: #0c0c0c;
    stroke-width: 1.2;
    stroke-linejoin: round;
}

.light {
    fill: #d3e2ff;
}

.dark {
    fill: #3c3c3c;
}

.side {
    fill: #8e8e8e;
}

.watermark {
    fill: #118acb;
}

.brush {
    font-family: "Noto Serif CJK SC", "Noto Sans CJK SC", serif;
    font-size: 60px;
    font-weight: 700;
}

.url {
    font-family: "Liberation Serif", serif;
    font-size: 16px;
    letter-spacing: 9px;
}

.view-tools {
    position: absolute;
    top: 2px;
    right: 60px;
    display: flex;
}

.handle {
    position: absolute;
    top: 430px;
    left: -2px;
    width: 10px;
    height: 39px;
    flex-direction: column;
    gap: 3px;
    background: #e4e7e6;
    border: 2px solid #222;
    border-left: none;
    z-index: 2;
}

.handle i {
    border: 3px solid transparent;
    border-right-color: #222;
    border-left: none;
}
```
